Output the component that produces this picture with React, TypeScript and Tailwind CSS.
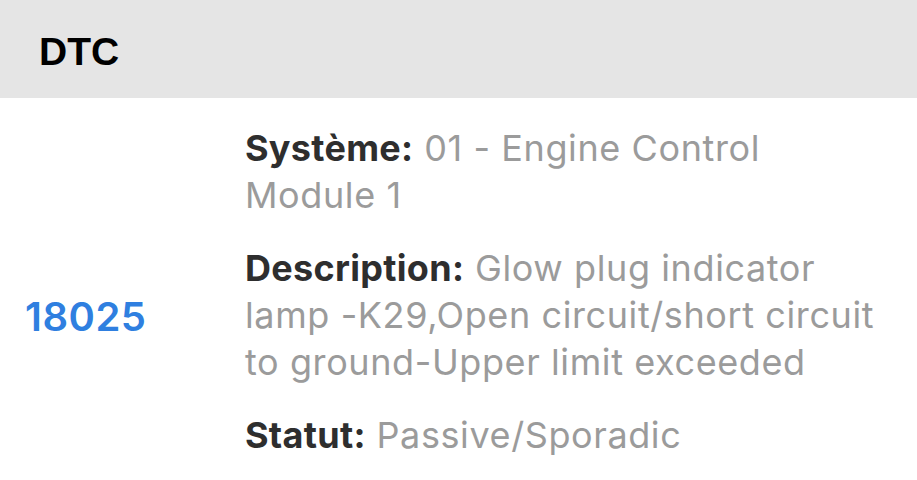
const rows = [
  { label: "Système:", value: "01 - Engine Control Module 1" },
  {
    label: "Description:",
    value: "Glow plug indicator lamp -K29,Open circuit/short circuit to ground-Upper limit exceeded",
  },
  { label: "Statut:", value: "Passive/Sporadic" },
];

export default function App() {
  return (
    <div className="w-[917px] h-[480px] overflow-hidden bg-white font-['Inter',sans-serif]">
      <div className="h-[98px] bg-[#e5e5e5] flex items-center pl-[39px] pt-[6px]">
        <h1 className="text-[39px] font-bold text-black font-['Liberation_Sans',sans-serif]">DTC</h1>
      </div>
      <div className="flex h-[438px]">
        <div className="w-[245px] flex items-center pl-[25px]">
          <span className="text-[40px] font-semibold text-[#2f7fe0] tracking-[0.5px]">18025</span>
        </div>
        <div className="w-[645px] flex flex-col gap-[26px] pt-[27px] text-[36px] leading-[47px] tracking-[0.6px]">
          {rows.map((r) => (
            <p key={r.label} className="text-[#9b9b9b]">
              <span className="font-bold text-[#2e2e2e] tracking-[0.3px]">{r.label}</span> {r.value}
            </p>
          ))}
        </div>
      </div>
    </div>
  );
}
